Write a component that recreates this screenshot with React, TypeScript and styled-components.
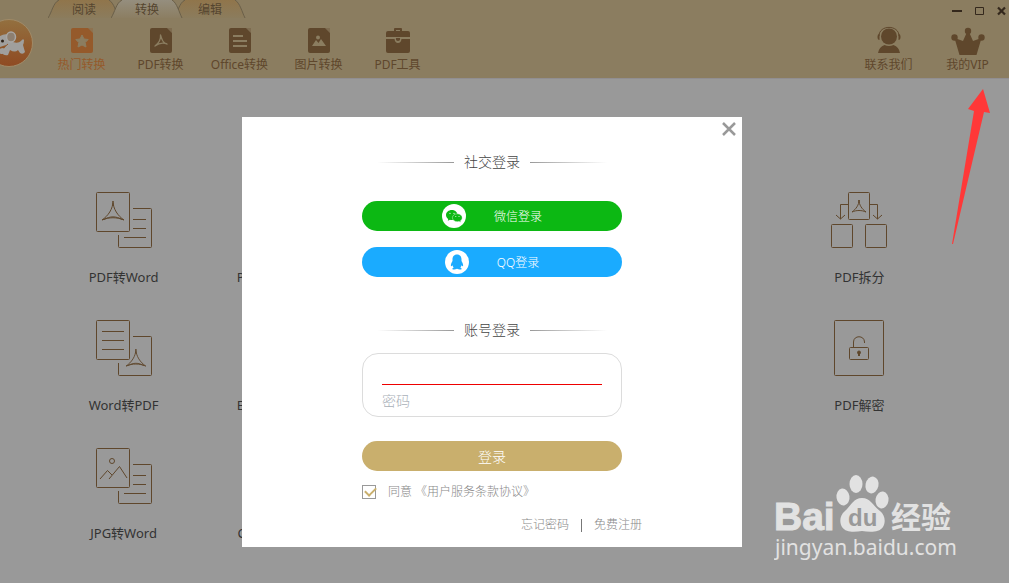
import React, { useState } from "react";
import styled, { createGlobalStyle } from "styled-components";

const brown = "#5f472c";

const GlobalStyle = createGlobalStyle`
  * { box-sizing: border-box; }
  body {
    margin: 0;
    background: #999999;
    font-family: "Noto Sans", "Noto Sans CJK SC", sans-serif;
  }
  button, input { font-family: inherit; }
  button { border: 0; padding: 0; background: none; cursor: pointer; }
`;

const Page = styled.div`
  position: relative;
  min-height: 100vh;
  overflow: hidden;
`;

const Header = styled.header`
  position: relative;
  height: 79px;
  background: #8b7d60;
  border-bottom: 1px solid #918e91;
`;

const TopBar = styled.div`
  display: flex;
  justify-content: space-between;
  height: 18px;
  padding-left: 48px;
`;

const Tabs = styled.nav`
  display: flex;
`;

const Tab = styled.button<{ $active?: boolean }>`
  position: relative;
  z-index: ${(p) => (p.$active ? 1 : 0)};
  width: 72px;
  height: 18px;
  margin-right: -9px;
  color: #55452f;
  font-size: 12px;
  line-height: 18px;
`;

const TabShape = styled.svg`
  position: absolute;
  inset: 0;
  z-index: -1;
`;

const TabText = styled.span`
  display: block;
  padding-top: 1px;
`;

const WindowButtons = styled.div`
  display: flex;
  align-items: flex-end;
  gap: 10px;
  padding-right: 2px;
`;

const WindowButton = styled.button`
  display: flex;
  width: 12px;
  height: 13px;
`;

const Logo = styled.svg`
  position: absolute;
  left: 0;
  top: 19px;
`;

const Toolbar = styled.div`
  display: flex;
  justify-content: space-between;
  padding: 8px 2px 0 42px;
`;

const ToolGroup = styled.div`
  display: flex;
`;

const Tool = styled.button<{ $active?: boolean }>`
  display: flex;
  flex-direction: column;
  align-items: center;
  gap: 2px;
  width: 79px;
  color: ${(p) => (p.$active ? "#955a2b" : brown)};
  font-size: 12px;
  line-height: 18px;
  white-space: nowrap;
`;

const Grid = styled.main`
  display: grid;
  grid-template-columns: repeat(6, 1fr);
  padding: 113px 76px 0 50px;
`;

const Tile = styled.button<{ $column: number }>`
  grid-column: ${(p) => p.$column};
  display: flex;
  flex-direction: column;
  align-items: center;
  gap: 19px;
  height: 128px;
  color: #333333;
  font-size: 13px;
  line-height: 20px;
  white-space: nowrap;
`;

const Overlay = styled.div`
  position: absolute;
  inset: 0;
  display: flex;
  justify-content: center;
  align-items: flex-start;
  padding: 117px 25px 0 0;
`;

const Dialog = styled.section`
  position: relative;
  width: 500px;
  max-width: 100%;
  padding: 35px 100px 12px;
  background: #ffffff;
  font-weight: 300;
  button, input { font-weight: inherit; }
`;

const Close = styled.button`
  position: absolute;
  top: 4px;
  right: 5px;
  display: flex;
`;

const Form = styled.form`
  display: flex;
  flex-direction: column;
  padding: 0 20px;
`;

const Title = styled.h2`
  display: flex;
  align-items: center;
  justify-content: center;
  gap: 10px;
  margin: 0;
  color: #444444;
  font-size: 14px;
  font-weight: inherit;
  line-height: 20px;
`;

const Rule = styled.span<{ $flip?: boolean }>`
  width: 77px;
  height: 1px;
  background: linear-gradient(${(p) => (p.$flip ? "to left" : "to right")}, #ffffff, #999999);
`;

const Socials = styled.div`
  display: flex;
  flex-direction: column;
  gap: 16px;
  padding: 29px 0 43px;
`;

const Pill = styled.button<{ $color: string; $size: number }>`
  display: flex;
  align-items: center;
  justify-content: center;
  gap: 28px;
  height: 30px;
  border-radius: 15px;
  background: ${(p) => p.$color};
  color: #ffffff;
  font-size: ${(p) => p.$size}px;
`;

const Fields = styled.div`
  margin: 13px 0 24px;
  padding: 0 19px;
  border: 1px solid #dcdcdc;
  border-radius: 16px;
`;

const Field = styled.input<{ $invalid?: boolean }>`
  display: block;
  width: 100%;
  height: 31px;
  padding: 0;
  border: 0;
  border-bottom: ${(p) => (p.$invalid ? "1px solid #ee0000" : "0")};
  outline: 0;
  background: transparent;
  color: #555555;
  font-size: 14px;
  &::placeholder { color: #a9b0b8; opacity: 1; }
`;

const Agree = styled.label`
  display: flex;
  align-items: center;
  gap: 12px;
  margin-top: 11px;
  color: #888888;
  font-size: 12px;
  line-height: 20px;
`;

const Check = styled.input`
  appearance: none;
  width: 14px;
  height: 14px;
  margin: 0;
  border: 1px solid #999999;
  position: relative;
  &:checked::after {
    content: "";
    position: absolute;
    left: 2px;
    top: 1px;
    width: 9px;
    height: 5px;
    border-left: 2px solid #c9af6d;
    border-bottom: 2px solid #c9af6d;
    transform: rotate(-45deg);
  }
`;

const Links = styled.div`
  display: flex;
  align-items: center;
  justify-content: flex-end;
  gap: 12px;
  margin-top: 13px;
  font-size: 12px;
  line-height: 20px;
`;

const Link = styled.a`
  color: #888888;
  text-decoration: none;
`;

const Divider = styled.span`
  width: 1px;
  height: 13px;
  background: #777777;
`;

const Arrow = styled.svg`
  position: absolute;
  top: 88px;
  right: 17px;
`;

const Watermark = styled.svg`
  position: absolute;
  right: 49px;
  bottom: 18px;
`;

const tabs = ["阅读", "转换", "编辑"];

function TabBack({ active }: { active: boolean }) {
  const id = active ? "tab-on" : "tab-off";
  return (
    <TabShape width="72" height="18" viewBox="0 0 72 18" aria-hidden="true">
      <defs>
        <linearGradient id={id} x1="0" y1="0" x2="0" y2="1">
          <stop offset="0" stopColor={active ? "#958e7e" : "#90754b"} />
          <stop offset="1" stopColor={active ? "#8c7e62" : "#8b7c5d"} />
        </linearGradient>
      </defs>
      <path d="M0 18C4 12 5 3 11 0H61C66 3 68 12 71 18Z" fill={`url(#${id})`} />
      <path d="M0 18C4 12 5 3 11 0M61 0C66 3 68 12 71 18" fill="none" stroke="#6a5f49" />
    </TabShape>
  );
}

type ToolKind = "star" | "pdf" | "lines" | "image" | "case" | "agent" | "crown";

function ToolIcon({ kind }: { kind: ToolKind }) {
  const cut = "#8b7d60";
  if (kind === "case")
    return (
      <svg width="26" height="28" viewBox="0 0 26 28" fill="currentColor">
        <path fillRule="evenodd" d="M9 5V3Q9 2 10 2H16Q17 2 17 3V5H23Q25 5 25 7V11H1V7Q1 5 3 5ZM11 4V5H15V4Z" />
        <path d="M1 13H9.500Q10 17 13 17T16.500 13H25V25Q25 27 23 27H3Q1 27 1 25Z" />
        <path d="M11 12H15V14Q13 16 11 14Z" />
      </svg>
    );
  if (kind === "agent")
    return (
      <svg width="26" height="28" viewBox="0 0 26 28" fill="currentColor">
        <circle cx="13" cy="10.500" r="8" />
        <path d="M2 27Q3 21 8.500 19Q13 21 17.500 19Q23 21 24 27Z" />
        <path d="M3 10C3-1.500 23-1.500 23 10" fill="none" stroke="currentColor" />
        <path d="M3.500 8Q1.500 8 1.500 11T3.500 14ZM22.500 8Q24.500 8 24.500 11T22.500 14Z" />
      </svg>
    );
  if (kind === "crown")
    return (
      <svg width="34" height="28" viewBox="0 0 34 28" fill="currentColor" overflow="visible">
        <circle cx="3.500" cy="11.500" r="3.200" />
        <circle cx="17" cy="5" r="3.200" />
        <circle cx="30.500" cy="11.500" r="3.200" />
        <path d="M3.500 12L12 15L16 6H18L22 15L30.500 12L25.500 29H8.500Z" />
      </svg>
    );
  return (
    <svg width="22" height="28" viewBox="0 0 22 28">
      <path d="M2 2H17L22 7V25Q22 27 20 27H2Q0 27 0 25V4Q0 2 2 2Z" fill="currentColor" />
      <path d="M17 2H22V7Z" fill="currentColor" opacity="0.3" />
      {kind === "star" && (
        <path d="M11 9L13 13L17.200 13.500L14.200 16.500L15 21L11 19L7 21L7.800 16.500L4.800 13.500L9 13Z" fill={cut} stroke={cut} strokeLinejoin="round" />
      )}
      {kind === "lines" && <path d="M4 10H14M4 15H18M4 20H18" stroke={cut} strokeWidth="2" />}
      {kind === "image" && (
        <g fill={cut}>
          <circle cx="10" cy="11.500" r="2" />
          <path d="M4 20L8 14L10.500 17L13 13L18 20Z" />
        </g>
      )}
      {kind === "pdf" && (
        <path d="M5 20C9 17 11 14 10.500 9C12 14 13 17 17 18C12 16 9 17 5 20Z" fill="none" stroke={cut} strokeWidth="1.300" strokeLinejoin="round" />
      )}
    </svg>
  );
}

type TileKind = "pdfDoc" | "docPdf" | "imageDoc" | "split" | "unlock";

function TileIcon({ kind }: { kind: TileKind }) {
  const line = { fill: "none", stroke: brown, strokeWidth: 1 };
  const acrobat = "M11 0C11 8 6 15 0 19C7 16 15 16 22 19C16 15 11 8 11 0ZM11 2V5M2 18.500C8 15 14 15 20 18.500";
  if (kind === "split")
    return (
      <svg width="56" height="56" viewBox="0 0 56 56" {...line}>
        <rect x="17.500" y="0.500" width="21" height="27" rx="1" />
        <rect x="0.500" y="32.500" width="21" height="23" rx="1" />
        <rect x="34.500" y="32.500" width="21" height="23" rx="1" />
        <path d="M17 12.500H9.500V27M5 23L9.500 27L14 23M39 12.500H46.500V27M42 23L46.500 27L51 23" />
        <path d="M28 8C28 13 25 17 21 20C25 18 31 18 35 20C31 17 28 13 28 8ZM28 8V11" />
      </svg>
    );
  if (kind === "unlock")
    return (
      <svg width="56" height="56" viewBox="0 0 56 56" {...line}>
        <rect x="3.500" y="0.500" width="49" height="55" rx="1" />
        <rect x="18.500" y="27.500" width="19" height="12" rx="1" />
        <path d="M22.500 27V22C22.500 15 33.500 15 33.500 22V23" />
        <path d="M28 33V36" strokeWidth="2" />
        <circle cx="28" cy="32.500" r="1.500" fill={brown} />
      </svg>
    );
  return (
    <svg width="56" height="56" viewBox="0 0 56 56" {...line}>
      <rect x="0.500" y="0.500" width="33" height="39" rx="1" />
      <path d="M37 16.500H54.500Q55.500 16.500 55.500 17.500V54.500Q55.500 55.500 54.500 55.500H23.500Q22.500 55.500 22.500 54.500V43" />
      {kind === "docPdf" ? (
        <>
          <path d="M6 11.500H28M6 20.500H28M6 29.500H28" />
          <path transform="translate(30 29) scale(.9)" d={acrobat} />
        </>
      ) : (
        <path d="M37 27.500H50M37 36.500H50M28 45.500H50" />
      )}
      {kind === "pdfDoc" && <path transform="translate(6 9)" d={acrobat} />}
      {kind === "imageDoc" && (
        <>
          <circle cx="16" cy="13" r="2.500" />
          <path d="M4 31L11.500 22.500L16 27M13 31L23.500 18.500L31 30" />
        </>
      )}
    </svg>
  );
}

const tools: [ToolKind, string][] = [
  ["star", "热门转换"],
  ["pdf", "PDF转换"],
  ["lines", "Office转换"],
  ["image", "图片转换"],
  ["case", "PDF工具"],
];

const account: [ToolKind, string][] = [
  ["agent", "联系我们"],
  ["crown", "我的VIP"],
];

const tiles: [number, TileKind, string][] = [
  [1, "pdfDoc", "PDF转Word"],
  [2, "pdfDoc", "PDF转Excel"],
  [6, "split", "PDF拆分"],
  [1, "docPdf", "Word转PDF"],
  [2, "docPdf", "Excel转PDF"],
  [6, "unlock", "PDF解密"],
  [1, "imageDoc", "JPG转Word"],
  [2, "pdfDoc", "CAJ转Word"],
];

function Elephant() {
  return (
    <Logo width="33" height="49" viewBox="0 0 33 49" aria-hidden="true">
      <defs>
        <linearGradient id="coin" x1="0" y1="0" x2="0" y2="1">
          <stop offset="0" stopColor="#93703f" />
          <stop offset="1" stopColor="#8f4a22" />
        </linearGradient>
      </defs>
      <circle cx="9" cy="24" r="23.500" fill="url(#coin)" stroke="#a08a67" />
      <g fill="#a09f9d">
        <path d="M0 17Q5 14 9 16Q13 18 13 23Q18 25 21 22Q23 19 24 21Q24 24 23 26L25 33Q23 36 20 34L18 31Q15 34 10 31L8 36Q4 37 2 34L1 31Q5 30 6 26L0 28Z" />
        <circle cx="2" cy="32" r="3" />
      </g>
      <ellipse cx="11" cy="18" rx="4.500" ry="5" fill="#8d7f70" stroke="#a9a7a4" strokeWidth="1.500" />
      <circle cx="2.500" cy="22" r="1.500" fill="#2b2118" />
      <path d="M0 29Q5 29 8 25" stroke="#8f5529" fill="none" />
    </Logo>
  );
}

function WeChatIcon() {
  return (
    <svg width="24" height="24" viewBox="0 0 24 24" aria-hidden="true">
      <circle cx="12" cy="12" r="12" fill="#fff" />
      <path d="M10 6C6.500 6 4 8.200 4 11C4 12.700 4.900 14 6.200 14.900L5.800 16.800L8 15.700Q9 16 10.500 15.900C13.500 15.700 15.500 13.500 15.500 11C15.500 8.200 13 6 10 6Z" fill="#0cb813" />
      <path d="M15.300 9.800C12.500 9.800 10.400 11.500 10.400 13.700S12.500 17.700 15.300 17.700L17 17.400L18.900 18.300L18.500 16.700C19.500 16 20.200 15 20.200 13.700C20.200 11.500 18 9.800 15.300 9.800Z" fill="#0cb813" stroke="#fff" strokeWidth=".4" />
      <g fill="#fff">
        <circle cx="8" cy="9.300" r=".6" />
        <circle cx="12" cy="9.300" r=".6" />
        <circle cx="13.800" cy="12.600" r=".5" />
        <circle cx="17" cy="12.600" r=".5" />
      </g>
    </svg>
  );
}

function QQIcon() {
  return (
    <svg width="24" height="24" viewBox="0 0 24 24" aria-hidden="true">
      <circle cx="12" cy="12" r="12" fill="#fff" />
      <path d="M12 4.500C8.700 4.500 7.500 7 7.500 9.500V11C6.500 12.500 5.700 14.500 5.900 16Q6.200 16.900 7.400 15.200Q7.800 16.500 8.700 17.400Q7 18.200 7.400 19.200Q9.500 20.200 12 18.800Q14.500 20.200 16.600 19.200Q17 18.200 15.300 17.400Q16.200 16.500 16.600 15.200Q17.800 16.900 18.100 16C18.300 14.500 17.500 12.500 16.500 11V9.500C16.500 7 15.300 4.500 12 4.500Z" fill="#1aabff" />
    </svg>
  );
}

export default function App() {
  const [agreed, setAgreed] = useState(true);
  return (
    <Page>
      <GlobalStyle />
      <Header>
        <TopBar>
          <Tabs>
            {tabs.map((t, i) => (
              <Tab key={t} $active={i === 1}>
                <TabBack active={i === 1} />
                <TabText>{t}</TabText>
              </Tab>
            ))}
          </Tabs>
          <WindowButtons>
            <WindowButton aria-label="最小化">
              <svg width="12" height="13"><path d="M1 6H11" stroke="#34281c" strokeWidth="2" /></svg>
            </WindowButton>
            <WindowButton aria-label="最大化">
              <svg width="12" height="13"><path d="M2.500 2.500H10.500V9.500H2.500Z" fill="none" stroke="#34281c" /></svg>
            </WindowButton>
            <WindowButton aria-label="关闭窗口">
              <svg width="12" height="13"><path d="M3 2.500L10 9.500M10 2.500L3 9.500" stroke="#34281c" strokeWidth="2.200" /></svg>
            </WindowButton>
          </WindowButtons>
        </TopBar>
        <Elephant />
        <Toolbar>
          <ToolGroup>
            {tools.map(([kind, label], i) => (
              <Tool key={label} $active={i === 0}>
                <ToolIcon kind={kind} />
                {label}
              </Tool>
            ))}
          </ToolGroup>
          <ToolGroup>
            {account.map(([kind, label]) => (
              <Tool key={label}>
                <ToolIcon kind={kind} />
                {label}
              </Tool>
            ))}
          </ToolGroup>
        </Toolbar>
      </Header>

      <Grid>
        {tiles.map(([column, kind, label]) => (
          <Tile key={label} $column={column}>
            <TileIcon kind={kind} />
            {label}
          </Tile>
        ))}
      </Grid>

      <Arrow width="42" height="157" viewBox="0 0 42 157" aria-hidden="true">
        <path d="M33 1L40 25L34 24L3 156L2 156L24 23L18 21Z" fill="#ff3838" />
      </Arrow>

      <Watermark width="186" height="96" viewBox="0 0 186 96" role="img" aria-label="Baidu 经验">
        <g fill="#e2e2e2">
          <text x="0" y="61" fontFamily="Liberation Sans, sans-serif" fontWeight="700" fontSize="39" stroke="#e2e2e2">Bai</text>
          <ellipse cx="69" cy="28" rx="6.500" ry="8.500" transform="rotate(-8 69 28)" />
          <ellipse cx="82" cy="15" rx="6.500" ry="9" />
          <ellipse cx="98" cy="16" rx="6.500" ry="8.500" transform="rotate(12 98 16)" />
          <ellipse cx="108" cy="31" rx="6.500" ry="8.500" transform="rotate(8 108 31)" />
          <path d="M88 29C79 29 77 37 71 42C66 46 65 53 68 58C72 64 81 63 88 62C95 63 105 64 109 58C112 53 111 46 106 42C99 37 97 29 88 29Z" />
          <text x="117" y="59" fontFamily="Noto Sans CJK SC, sans-serif" fontWeight="700" fontSize="30">经验</text>
          <text x="1" y="86" fontFamily="Noto Sans, sans-serif" fontSize="21">jingyan.baidu.com</text>
        </g>
        <text x="74" y="57" fill="#999999" fontFamily="Liberation Sans, sans-serif" fontWeight="700" fontSize="24">du</text>
      </Watermark>

      <Overlay>
        <Dialog role="dialog" aria-label="登录">
          <Close aria-label="关闭">
            <svg width="16" height="16"><path d="M2 2L14 14M14 2L2 14" stroke="#999999" strokeWidth="2.500" /></svg>
          </Close>
          <Form onSubmit={(e) => e.preventDefault()}>
            <Title><Rule />社交登录<Rule $flip /></Title>
            <Socials>
              <Pill type="button" $color="#0cb813" $size={12}><WeChatIcon />微信登录</Pill>
              <Pill type="button" $color="#1aabff" $size={12}><QQIcon />QQ登录</Pill>
            </Socials>
            <Title><Rule />账号登录<Rule $flip /></Title>
            <Fields>
              <Field $invalid aria-label="账号" />
              <Field type="password" placeholder="密码" aria-label="密码" />
            </Fields>
            <Pill type="submit" $color="#c9af6d" $size={14}>登录</Pill>
            <Agree>
              <Check type="checkbox" checked={agreed} onChange={(e) => setAgreed(e.target.checked)} />
              同意 《用户服务条款协议》
            </Agree>
          </Form>
          <Links>
            <Link href="#forgot">忘记密码</Link>
            <Divider />
            <Link href="#register">免费注册</Link>
          </Links>
        </Dialog>
      </Overlay>
    </Page>
  );
}
